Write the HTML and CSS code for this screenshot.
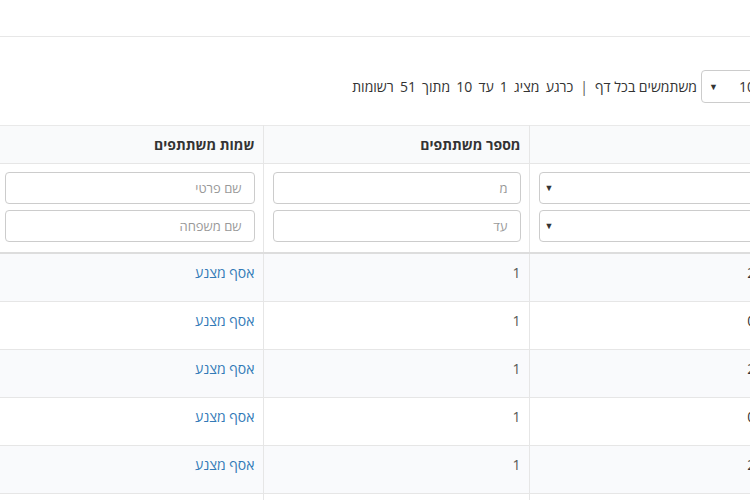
FILE: index.html
```html
<!DOCTYPE html>
<html lang="he">
<head>
  <meta charset="UTF-8" />
  <meta name="viewport" content="width=device-width, initial-scale=1" />
  <title>פגישות</title>
  <link rel="stylesheet" href="styles.css">
</head>
<body>

<div class="viewport">
  <div class="topbar"></div>

  <div class="frame" dir="rtl">
    <div class="toolbar">
      <div class="fake-select page-size">
        <span class="value">10</span>
        <span class="caret">▼</span>
      </div>
      <span class="page-label">משתמשים בכל דף</span>
      <span class="sep">|</span>
      <span class="info">כרגע מציג 1 עד 10 מתוך 51 רשומות</span>
    </div>

    <table class="grid">
      <colgroup>
        <col class="col-time" />
        <col class="col-count" />
        <col class="col-names" />
      </colgroup>
      <thead>
        <tr class="titles">
          <th>שעה</th>
          <th>מספר משתתפים</th>
          <th>שמות משתתפים</th>
        </tr>
        <tr class="filters">
          <td>
            <div class="stack">
              <div class="fake-select"><span class="caret">▼</span></div>
              <div class="fake-select"><span class="caret">▼</span></div>
            </div>
          </td>
          <td>
            <div class="stack">
              <input type="text" placeholder="מ" />
              <input type="text" placeholder="עד" />
            </div>
          </td>
          <td>
            <div class="stack">
              <input type="text" placeholder="שם פרטי" />
              <input type="text" placeholder="שם משפחה" />
            </div>
          </td>
        </tr>
      </thead>
      <tbody>
        <tr><td>21:00</td><td class="num">1</td><td><a href="#">אסף מצנע</a></td></tr>
        <tr><td>09:30</td><td class="num">1</td><td><a href="#">אסף מצנע</a></td></tr>
        <tr><td>20:15</td><td class="num">1</td><td><a href="#">אסף מצנע</a></td></tr>
        <tr><td>08:45</td><td class="num">1</td><td><a href="#">אסף מצנע</a></td></tr>
        <tr><td>22:00</td><td class="num">1</td><td><a href="#">אסף מצנע</a></td></tr>
        <tr><td>07:30</td><td class="num">1</td><td><a href="#">אסף מצנע</a></td></tr>
      </tbody>
    </table>
  </div>
</div>

</body>
</html>
```

FILE: styles.css
```css
body {
  margin: 0;
  font-family: "Open Sans", "Liberation Sans", sans-serif;
  font-size: 14px;
  color: #333;
  background: #fff;
}
.viewport {
  width: 750px;
  height: 500px;
  overflow: hidden;
}
.topbar {
  height: 36px;
  border-bottom: 1px solid #e7e7e7;
}
.frame {
  width: 791px;
}

/* toolbar above the table */
.toolbar {
  display: flex;
  align-items: center;
  height: 33px;
  margin: 33px 23px 0 0;
  line-height: 20px;
}
.fake-select {
  display: flex;
  align-items: center;
  justify-content: space-between;
  box-sizing: border-box;
  height: 32px;
  padding: 0 10px 0 5px;
  border: 1px solid #ccc;
  border-radius: 4px;
  background: #fff;
}
.fake-select .caret {
  font-size: 9px;
  color: #333;
  margin-right: auto;
}
.page-size {
  width: 67px;
  height: 33px;
  padding: 0 12px 0 7px;
}
.page-label {
  margin-right: 4px;
}
.sep {
  margin: 0 7px 0 7px;
  color: #555;
}
.info {
  word-spacing: 2.5px;
}

/* table */
.grid {
  width: 100%;
  border-collapse: collapse;
  margin-top: 22px;
  table-layout: fixed;
  border-top: 1px solid #e9e9e9;
}
.col-names { width: 263px; }
.col-count { width: 266px; }
.grid th,
.grid td {
  text-align: right;
  padding: 9px 8px 18px;
  line-height: 20px;
  vertical-align: top;
}
.grid th + th,
.grid td + td {
  border-right: 1px solid #e6e6e6;
}
.grid tr > :last-child {
  padding-left: 5px;
}
.titles th {
  background: #f9fafb;
  font-weight: bold;
  padding: 9px 8px 8px;
}
.filters td {
  padding: 8px 8px 10px 9px;
  border-top: 1px solid #e6e6e6;
  border-bottom: 2px solid #dddddd;
}
.stack {
  display: flex;
  flex-direction: column;
  gap: 6px;
}
.stack input {
  box-sizing: border-box;
  width: 100%;
  height: 32px;
  padding: 6px 12px;
  border: 1px solid #ccc;
  border-radius: 4px;
  font-family: inherit;
  font-size: 13px;
  color: #555;
  direction: rtl;
}
.stack input::placeholder {
  color: #999;
}
.grid tbody tr {
  border-bottom: 1px solid #e6e6e6;
}
.grid tbody tr:nth-child(odd) {
  background: #f9fafc;
}
.grid .num {
  color: #555;
}
.grid a {
  color: #337ab7;
  text-decoration: none;
}
```
